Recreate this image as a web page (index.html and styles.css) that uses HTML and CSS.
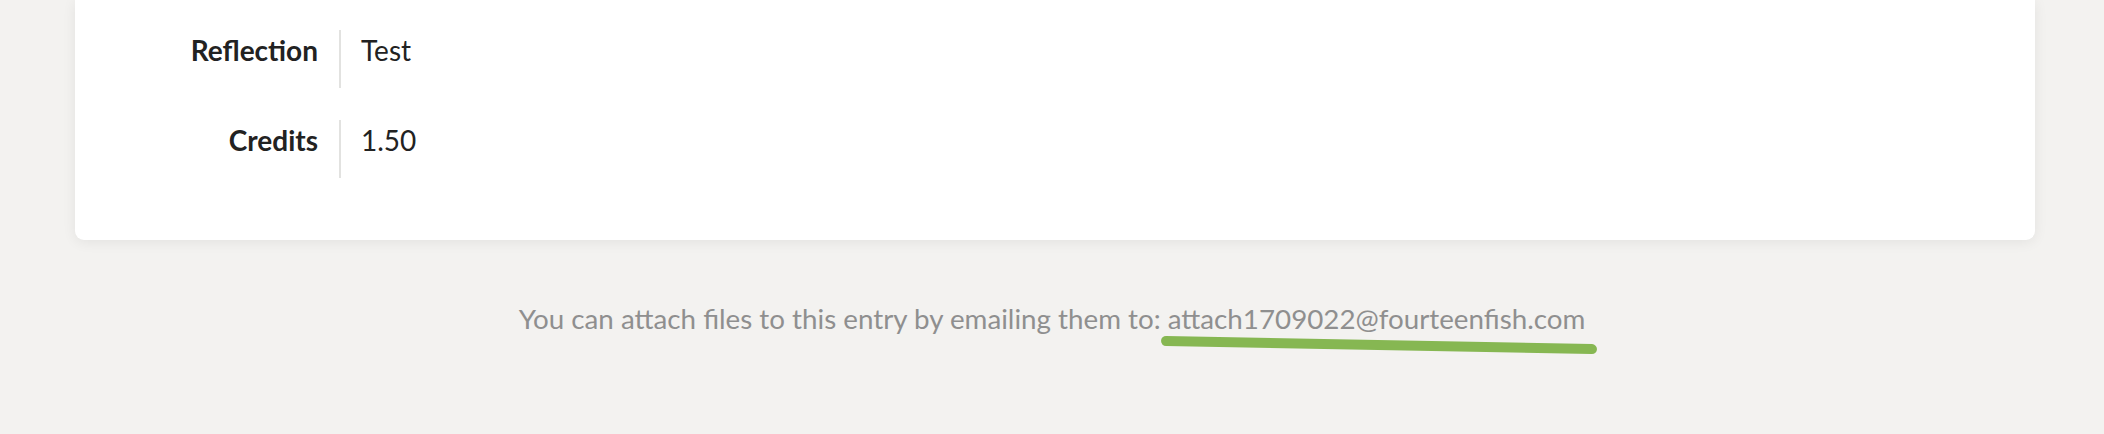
FILE: index.html
```html
<!DOCTYPE html>
<html lang="en">
<head>
    <meta charset="UTF-8">
    <meta name="viewport" content="width=device-width, initial-scale=1.0">
    <title>Entry</title>
    <link rel="stylesheet" href="styles.css">
</head>
<body>
    <div class="entry-card">
        <div class="field-row">
            <div class="field-label">Reflection</div>
            <div class="field-value">Test</div>
        </div>
        <div class="field-row">
            <div class="field-label">Credits</div>
            <div class="field-value">1.50</div>
        </div>
    </div>

    <p class="attach-note">
        You can attach files to this entry by emailing them to:
        <span class="attach-email">attach1709022@fourteenfish.com</span>
    </p>
</body>
</html>
```

FILE: styles.css
```css
body {
    margin: 0;
    padding: 0 0 80px 0;
    background-color: #f3f2f0;
    font-family: Lato, "Open Sans", sans-serif;
    font-size: 28px;
    line-height: 40px;
    color: #222;
}
.entry-card {
    margin: 0 69px 0 75px;
    padding: 30px 0 62px 0;
    background-color: #fff;
    border-radius: 0 0 9px 9px;
    box-shadow: 0 2px 14px rgba(0, 0, 0, 0.07);
}
.field-row {
    display: flex;
    margin-bottom: 32px;
}
.field-row:last-child {
    margin-bottom: 0;
}
.field-label {
    width: 243px;
    padding-right: 21px;
    text-align: right;
    font-weight: bold;
}
.field-value {
    min-height: 40px;
    padding: 0 0 18px 20px;
    border-left: 2px solid #e2e2e0;
}
.attach-note {
    margin: 59px 0 0 0;
    text-align: center;
    font-size: 27.75px;
    color: #8f8f8f;
}
.attach-email {
    position: relative;
}
/* green marker stroke under the address */
.attach-email::after {
    content: "";
    position: absolute;
    left: -7px;
    right: -11px;
    top: 38px;
    height: 10px;
    border-radius: 5px;
    background-color: #86b752;
    transform: rotate(1.1deg);
}
```
